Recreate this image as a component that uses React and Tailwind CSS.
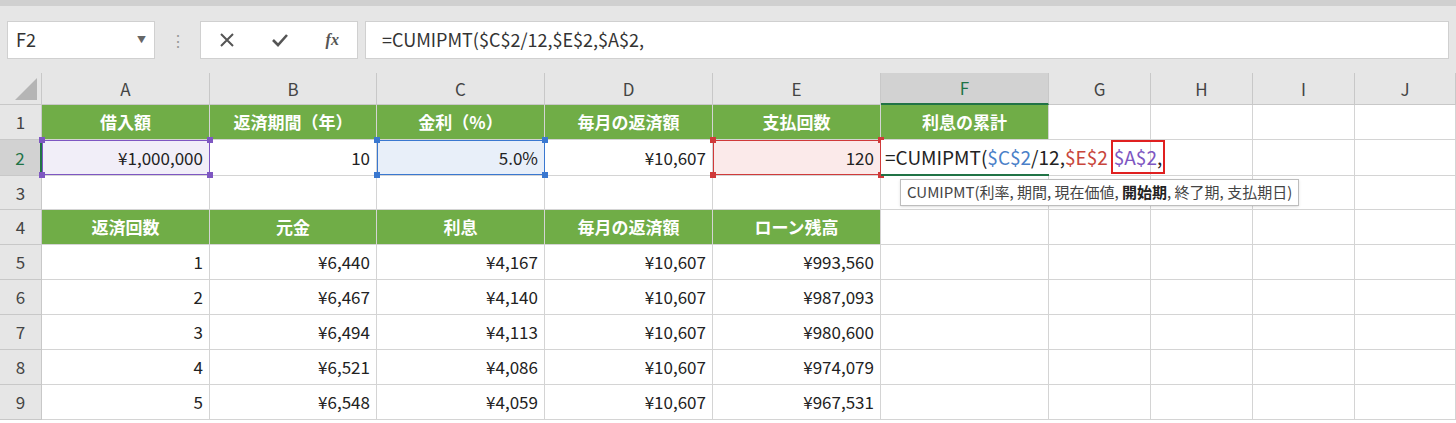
import React from 'react';

const cols = [
  ['A', 168], ['B', 167], ['C', 168], ['D', 168], ['E', 168], ['F', 168],
  ['G', 102], ['H', 102], ['I', 102], ['J', 101],
];
const tmpl = '42px ' + cols.map(c => c[1] + 'px').join(' ');
const F = { fontFamily: '"Noto Sans CJK JP", "Noto Sans", sans-serif' };

const Cell = ({ children, cls = '' }) => (
  <div className={'border-r border-b border-[#d4d4d4] flex items-center px-1.5 text-[17px] text-[#222] overflow-visible whitespace-nowrap ' + cls}>{children}</div>
);
const H = ({ children }) => <Cell cls="bg-[#70ad47] text-white font-bold justify-center border-[#70ad47]">{children}</Cell>;
const R = ({ children, cls = '' }) => <Cell cls={'justify-end ' + cls}>{children}</Cell>;
const RowH = ({ n }) => <div className="bg-[#e6e6e6] border-r border-b border-[#c8c8c8] flex items-center justify-center text-[17px] text-[#444]">{n}</div>;
const Empty = () => <Cell />;
const Handle = ({ c, pos }) => <span className={`absolute w-[6px] h-[6px] ${c} ${pos}`} />;

const Sel = ({ children, border, bg, hc }) => (
  <div className={`relative border-b border-[#d4d4d4] ${bg}`}>
    <div className={`absolute inset-0 border ${border} flex items-center justify-end px-1.5 text-[17px] text-[#222]`}>{children}</div>
    <Handle c={hc} pos="-left-[3px] -top-[3px]" /><Handle c={hc} pos="-right-[3px] -top-[3px]" />
    <Handle c={hc} pos="-left-[3px] -bottom-[3px]" /><Handle c={hc} pos="-right-[3px] -bottom-[3px]" />
  </div>
);

const data = [
  [1, '¥6,440', '¥4,167', '¥10,607', '¥993,560'],
  [2, '¥6,467', '¥4,140', '¥10,607', '¥987,093'],
  [3, '¥6,494', '¥4,113', '¥10,607', '¥980,600'],
  [4, '¥6,521', '¥4,086', '¥10,607', '¥974,079'],
  [5, '¥6,548', '¥4,059', '¥10,607', '¥967,531'],
];

export default function App() {
  return (
    <div className="w-[1456px] h-[423px] bg-white overflow-hidden" style={F}>
      <div className="h-[73px] bg-[#e6e6e6] border-t-[6px] border-[#d0d0d0] flex items-center gap-0 px-[7px]">
        <div className="w-[148px] h-[38px] bg-white border border-[#d0d0d0] flex items-center justify-between px-2 text-[18px] text-[#333]">
          F2<span className="text-[9px] text-[#666]">▼</span>
        </div>
        <div className="w-[45px] flex justify-center text-[#999] text-[16px]">⋮</div>
        <div className="w-[158px] h-[38px] bg-white border border-[#d0d0d0] flex items-center justify-around text-[#555]">
          <svg width="16" height="16" viewBox="0 0 16 16"><path d="M2 2L14 14M14 2L2 14" stroke="#555" strokeWidth="2" /></svg>
          <svg width="18" height="16" viewBox="0 0 18 16"><path d="M2 8L7 13L16 3" stroke="#555" strokeWidth="2.6" fill="none" /></svg>
          <span className="italic font-bold text-[16px]" style={{ fontFamily: '"Liberation Serif", serif' }}>fx</span>
        </div>
        <div className="ml-[7px] flex-1 h-[38px] bg-white border border-[#d0d0d0] flex items-center px-4 text-[18px] text-[#333]">
          =CUMIPMT($C$2/12,$E$2,$A$2,
        </div>
      </div>
      <div className="grid" style={{ gridTemplateColumns: tmpl, gridTemplateRows: '32px 35px 36px 34px 35px 35px 35px 35px 35px 35px' }}>
        <div className="bg-[#e6e6e6] border-r border-b border-[#c8c8c8] flex items-end justify-end p-1">
          <div className="w-0 h-0 border-l-[22px] border-l-transparent border-b-[22px] border-b-[#b5b5b5]" />
        </div>
        {cols.map(([c]) => (
          <div key={c} className={`border-r border-b border-[#c8c8c8] flex items-center justify-center text-[17px] ${c === 'F' ? 'bg-[#d2d2d2] border-b-2 border-b-[#217346] text-[#217346]' : 'bg-[#e6e6e6] text-[#444]'}`}>{c}</div>
        ))}

        <RowH n={1} />
        <H>借入額</H><H>返済期間（年）</H><H>金利（%）</H><H>毎月の返済額</H><H>支払回数</H><H>利息の累計</H>
        <Empty /><Empty /><Empty /><Empty />

        <div className="bg-[#d2d2d2] border-r-2 border-r-[#217346] border-b border-[#c8c8c8] flex items-center justify-center text-[17px] text-[#217346]">2</div>
        <Sel border="border-[#7e57c2]" bg="bg-[#f1eef8]" hc="bg-[#7e57c2]">¥1,000,000</Sel>
        <R>10</R>
        <Sel border="border-[#3a78d0]" bg="bg-[#e8eff9]" hc="bg-[#3a78d0]">5.0%</Sel>
        <R>¥10,607</R>
        <Sel border="border-[#d03a3a]" bg="bg-[#fbeaea]" hc="bg-[#d03a3a]">120</Sel>
        <div className="relative border-b-2 border-[#217346] bg-white">
          <div className="absolute left-0 top-0 h-full flex items-center pl-1 text-[19px] text-[#222] whitespace-nowrap z-10">
            =CUMIPMT(<span className="text-[#4a80c8]">$C$2</span>/12,<span className="text-[#c8463c]">$E$2</span>
            <span className="ml-[3px] border-2 border-[#e02020] px-[1px] h-[34px] flex items-center"><span className="text-[#7e57c2]">$A$2</span>,</span>
          </div>
        </div>
        <Empty /><Empty /><Empty /><Empty />

        <RowH n={3} />
        <Empty /><Empty /><Empty /><Empty /><Empty />
        <div className="relative border-r border-b border-[#d4d4d4]">
          <div className="absolute left-[19px] top-[3px] bg-white border border-[#bdbdbd] shadow-sm px-1.5 py-[1px] text-[15px] text-[#444] whitespace-nowrap z-10">
            CUMIPMT(利率, 期間, 現在価値, <b className="text-[#222]">開始期</b>, 終了期, 支払期日)
          </div>
        </div>
        <Empty /><Empty /><Empty /><Empty />

        <RowH n={4} />
        <H>返済回数</H><H>元金</H><H>利息</H><H>毎月の返済額</H><H>ローン残高</H>
        <Empty /><Empty /><Empty /><Empty /><Empty />

        {data.map((r, i) => (
          <React.Fragment key={i}>
            <RowH n={i + 5} />
            {r.map((v, j) => <R key={j}>{v}</R>)}
            <Empty /><Empty /><Empty /><Empty /><Empty />
          </React.Fragment>
        ))}
      </div>
    </div>
  );
}
